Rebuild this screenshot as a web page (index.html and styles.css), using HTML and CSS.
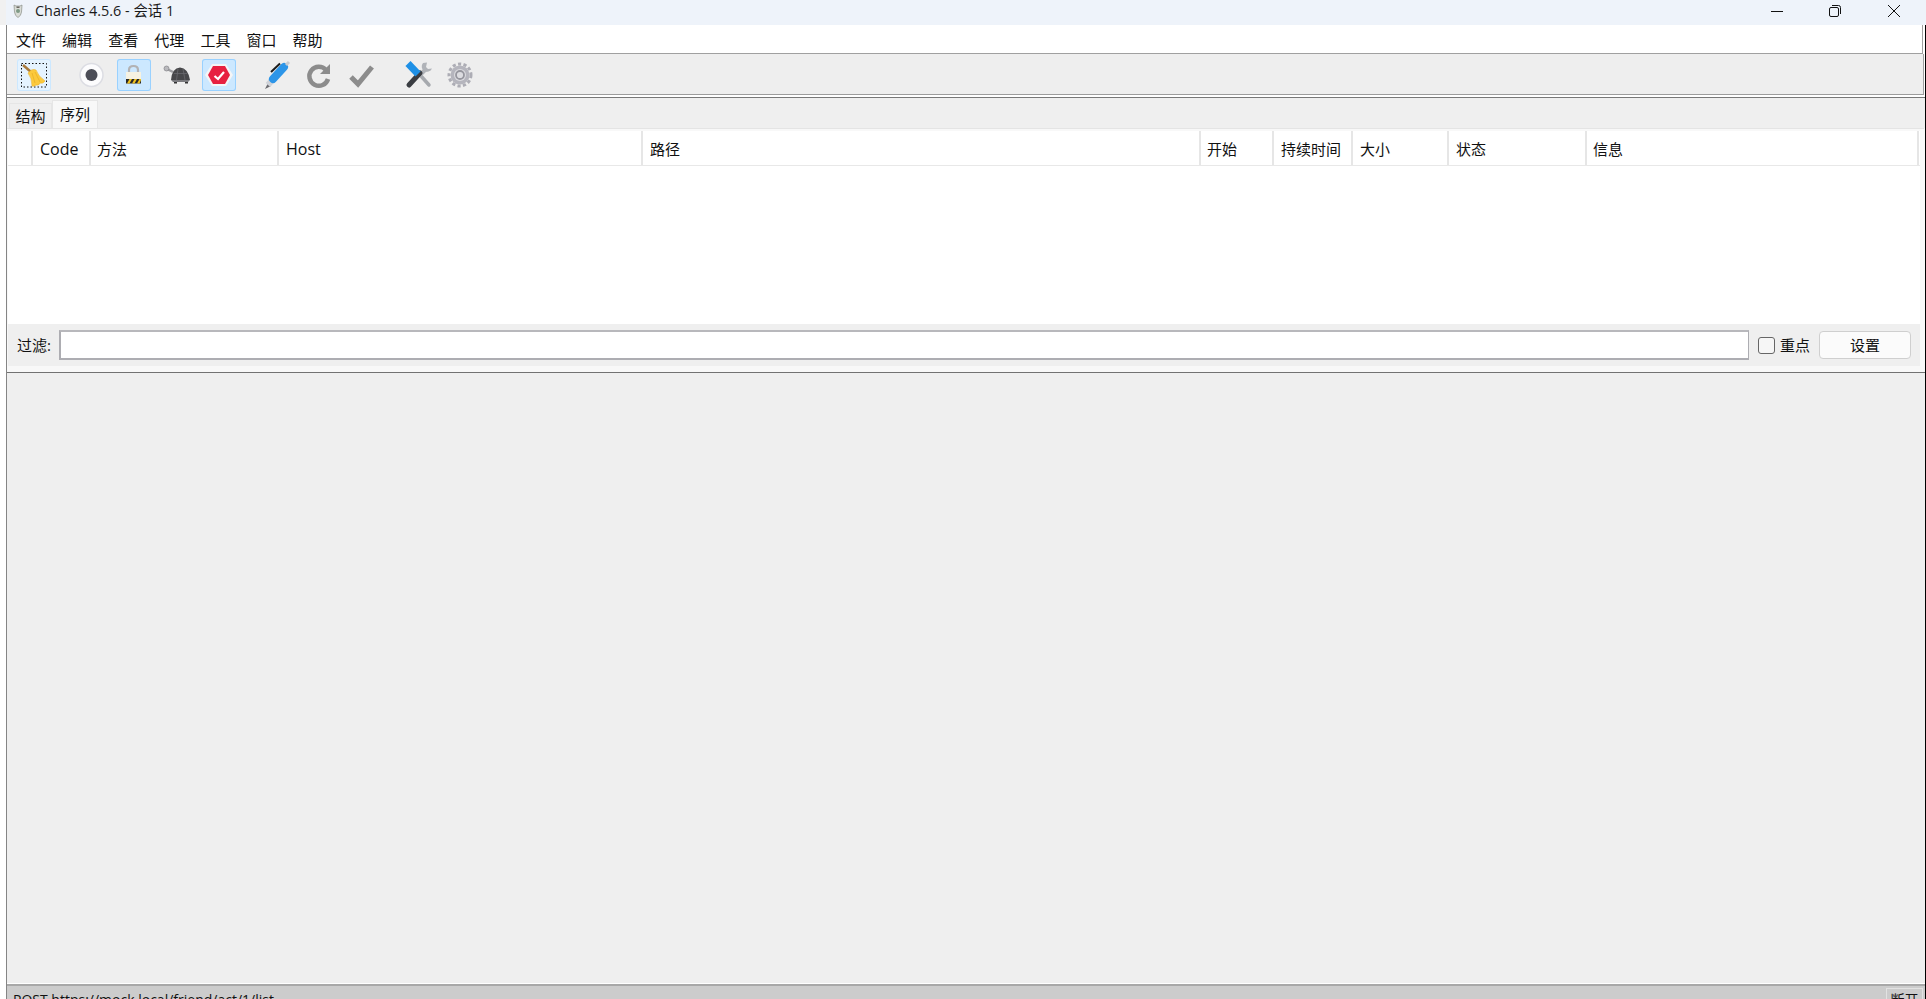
FILE: index.html
```html
<!DOCTYPE html>
<html lang="zh">
<head>
<meta charset="utf-8">
<title>Charles 4.5.6 - 会话 1</title>
<link rel="stylesheet" href="styles.css">
</head>
<body>
<div class="window">
  <header class="titlebar">
    <svg class="app-icon" viewBox="0 0 10 14" width="10" height="14"><path d="M1 1 L3 2 H7 L9 1 L8.5 8 Q8 12 5 13.5 Q2 12 1.500 8 Z" fill="#d9dcd6" stroke="#8b8f88" stroke-width=".7"/><circle cx="5" cy="7" r="2" fill="#7f9a86"/><rect x="3.500" y="2.500" width="3" height="1.500" fill="#6d6a63"/></svg>
    <span class="title">Charles 4.5.6 - 会话 1</span>
    <div class="winctl">
      <span class="winbtn"><svg viewBox="0 0 14 14" width="14" height="14"><path d="M1 7.500 H13" stroke="#111" fill="none"/></svg></span>
      <span class="winbtn"><svg viewBox="0 0 14 14" width="14" height="14"><rect x="1.500" y="3.500" width="9" height="9" rx="1.500" fill="none" stroke="#111"/><path d="M4 1.500 H10.500 Q12.500 1.500 12.500 3.500 V10" fill="none" stroke="#111"/></svg></span>
      <span class="winbtn"><svg viewBox="0 0 14 14" width="14" height="14"><path d="M1 1 L13 13 M13 1 L1 13" stroke="#111" fill="none"/></svg></span>
    </div>
  </header>
  <div class="app">
    <nav class="menubar">
      <span class="menu">文件</span><span class="menu">编辑</span><span class="menu">查看</span><span class="menu">代理</span><span class="menu">工具</span><span class="menu">窗口</span><span class="menu">帮助</span>
    </nav>
    <div class="toolbar">
      <div class="tool-group">
        <span class="tool tool-hover">
          <svg viewBox="0 0 34 32" width="34" height="32"><rect x="4.500" y="4.500" width="25" height="23.500" fill="none" stroke="#111" stroke-dasharray="1.500 2"/><path d="M6 6 L14 13" stroke="#a9793b" stroke-width="2.500"/><path d="M11 14 Q15 9 19 11 Q21 17 28 22 Q26 25 23 24 Q22 27 19 26 Q17 28 15 27 Q15 19 11 14 Z" fill="#fbc93d" stroke="#eeb42c" stroke-width=".6"/><path d="M15 14 L18 24 M18 13 L23 23" stroke="#e8ad24" stroke-width=".7" fill="none"/></svg>
        </span>
      </div>
      <div class="tool-group tool-group-offset">
        <span class="tool">
          <svg viewBox="0 0 34 32" width="34" height="32"><circle cx="16.500" cy="16" r="11.500" fill="#fcfcfd" stroke="#dcdde3" stroke-width="1.500"/><circle cx="16.500" cy="16" r="6" fill="#4c4e57"/></svg>
        </span>
        <span class="tool tool-on">
          <svg viewBox="0 0 34 32" width="34" height="32"><path d="M12 14 V11 Q12 7 16.500 7 Q21 7 21 11 V14" fill="none" stroke="#b2b2b4" stroke-width="2.200"/><rect x="9" y="13" width="15" height="7" fill="#f6f2e2"/><rect x="9" y="20" width="15" height="4.500" fill="#2a2a28"/><path d="M10 24.500 L12.500 20 H15 L12.500 24.500 Z M15 24.500 L17.500 20 H20 L17.500 24.500 Z M20 24.500 L22.500 20 H24 V21 L22.500 24.500 Z" fill="#f1c21f"/></svg>
        </span>
        <span class="tool">
          <svg viewBox="0 0 34 32" width="34" height="32"><path d="M7 10 L13 13" stroke="#9d9da1" stroke-width="2.500"/><circle cx="6.500" cy="9.500" r="2.500" fill="#b9b9bd" stroke="#77777c" stroke-width=".6"/><path d="M11 21 Q12 9 20 8.500 Q28 9 30 21 Z" fill="#47474a"/><path d="M14 14.500 H27 M18 10 L16.500 21 M23 10 L25 21" stroke="#68686d" stroke-width=".8" fill="none"/><path d="M11 21 H30 L28 23 H13 Z" fill="#7b7b7f"/><rect x="14" y="23" width="3" height="1.500" fill="#333"/><rect x="25" y="23" width="3" height="1.500" fill="#333"/></svg>
        </span>
        <span class="tool tool-on">
          <svg viewBox="0 0 34 32" width="34" height="32"><path d="M10 5 H24 L31 16 L24 27 H10 L3 16 Z" fill="#f5f5f6"/><path d="M11 7 H23 L28 16 L23 25 H11 L6 16 Z" fill="#e72040"/><path d="M12.500 17 L16 20 L22 13" fill="none" stroke="#fff" stroke-width="2.200"/></svg>
        </span>
      </div>
      <div class="tool-group">
        <span class="tool">
          <svg viewBox="0 0 34 32" width="34" height="32"><path d="M9 24 L6 30 L12 27 Z" fill="#6b6b70"/><path d="M9 26 L14 20" stroke="#cfd2d8" stroke-width="6" stroke-linecap="butt"/><path d="M14 20 L25 8" stroke="#2c95e8" stroke-width="8" stroke-linecap="round"/><path d="M12 13 L21 4.500" stroke="#1c1c1c" stroke-width="2" fill="none"/><path d="M27 6 L30 3" stroke="#c8cbd0" stroke-width="3"/></svg>
        </span>
        <span class="tool">
          <svg viewBox="0 0 34 32" width="34" height="32"><path d="M24 11 A9.500 9.500 0 1 0 26 20" fill="none" stroke="#8c8c8c" stroke-width="4.500"/><path d="M28 5 V15 H18 Z" fill="#8c8c8c"/></svg>
        </span>
        <span class="tool">
          <svg viewBox="0 0 34 32" width="34" height="32"><path d="M7 18 L14 25 L28 8" fill="none" stroke="#8c8c8c" stroke-width="5"/></svg>
        </span>
      </div>
      <div class="tool-group">
        <span class="tool">
          <svg viewBox="0 0 34 32" width="34" height="32"><path d="M20 17 L28 26" stroke="#a6a9ae" stroke-width="3.500" stroke-linecap="round"/><path d="M18 17 L25 10" stroke="#b0b3b8" stroke-width="4"/><path d="M22 4 A5.500 5.500 0 0 0 23 12 A5.500 5.500 0 0 0 31 9.500 L27 10 L25 8 L26 3.500 Z" fill="#b0b3b8"/><path d="M8 26 L19 14" stroke="#3a3d42" stroke-width="5" stroke-linecap="round"/><path d="M7 4.500 L17 15" stroke="#1e90e6" stroke-width="7"/></svg>
        </span>
        <span class="tool">
          <svg viewBox="0 0 34 32" width="34" height="32"><circle cx="16" cy="16" r="11" fill="none" stroke="#adadb5" stroke-width="3" stroke-dasharray="3.200 2.300"/><circle cx="16" cy="16" r="9.500" fill="#b5b5bd"/><circle cx="16" cy="16" r="6" fill="#dcdce0"/><circle cx="16" cy="16" r="4" fill="none" stroke="#96969e" stroke-width="1.800"/></svg>
        </span>
      </div>
    </div>
    <div class="gap"></div>
    <section class="session">
      <div class="tabs">
        <span class="tab">结构</span>
        <span class="tab tab-active">序列</span>
      </div>
      <div class="table-wrap">
        <div class="thead">
          <span class="th c0"></span>
          <span class="th th-latin c1">Code</span>
          <span class="th c2">方法</span>
          <span class="th th-latin c3">Host</span>
          <span class="th c4">路径</span>
          <span class="th c5">开始</span>
          <span class="th c6">持续时间</span>
          <span class="th c7">大小</span>
          <span class="th c8">状态</span>
          <span class="th c9">信息</span>
        </div>
        <div class="tbody"></div>
      </div>
      <div class="filter">
        <label class="filter-label">过滤:</label>
        <div class="filter-input"></div>
        <span class="check"></span>
        <span class="check-label">重点</span>
        <span class="button">设置</span>
      </div>
    </section>
    <section class="detail"></section>
    <footer class="statusbar">
      <span class="status-text">POST https://mock.local/friend/act/1/list</span>
      <span class="status-btn">断开</span>
    </footer>
  </div>
</div>
</body>
</html>
```

FILE: styles.css
```css
* { box-sizing: border-box; }
html, body { margin: 0; padding: 0; height: 100%; background: #fff; }
body {
  font-family: "Open Sans", "Noto Sans CJK SC", sans-serif;
  font-size: 15px;
  color: #111;
  overflow: hidden;
}
.window { display: flex; flex-direction: column; height: 999px; overflow: hidden; }

.titlebar {
  display: flex; align-items: center;
  height: 25px; flex: none;
  background: #eef3fa;
  border-left: 6px solid #f1f1f1;
  padding: 0 3px 3px 7px;
}
.app-icon { flex: none; }
.title { margin-left: 12px; font-size: 14.400px; line-height: 20px; color: #1a1a1a; }
.winctl { margin-left: auto; display: flex; }
.winbtn { width: 58.5px; display: flex; justify-content: center; align-items: center; }

.app {
  flex: 1; min-height: 0;
  display: flex; flex-direction: column;
  margin-left: 6px;
  border-left: 1px solid #858585;
  border-right: 1px solid #000;
}

.menubar {
  flex: none; height: 29px;
  display: flex; align-items: center;
  padding: 1px 0 0 1px;
  margin-right: 2px;
  background: #fff;
  border-bottom: 1px solid #a0a0a0;
  border-right: 1px solid #a0a0a0;
}
.menu { width: 46.1px; padding-left: 8px; font-size: 15px; line-height: 24px; white-space: nowrap; }

.toolbar {
  flex: none; height: 41px;
  display: flex; align-items: flex-start;
  gap: 23px;
  padding: 5px 0 0 10px;
  margin-right: 1px;
  background: #eeeeee;
  border-bottom: 1px solid #9c9c9c;
  border-right: 1px solid #a0a0a0;
}
.tool-group { display: flex; gap: 8.500px; }
.tool-group-offset { margin-left: .5px; }
.tool { width: 34px; height: 32px; display: block; border-radius: 3px; }
.tool svg { display: block; }
.tool-hover { background: #e5f3ff; box-shadow: inset 0 0 0 1px #cce8ff; }
.tool-on { background: #cce8ff; box-shadow: inset 0 0 0 1px #99d1ff; }

.gap { flex: none; height: 2px; background: #fff; }

.session {
  flex: none; height: 275px;
  display: flex; flex-direction: column;
  background: #f8f8f8;
  border-top: 1px solid #787878;
  padding-bottom: 5px;
}
.tabs {
  flex: none; height: 30px;
  display: flex; align-items: flex-end;
  padding-left: 2px;
  background: #efefef;
}
.tab {
  width: 43px; height: 25px;
  font-size: 15px; line-height: 24px; text-align: center;
  border: 1px solid #e6e6e6; border-bottom: 0;
  background: #efefef;
}
.tab-active { width: 46px; height: 28px; background: #f8f8f8; line-height: 27px; }

.table-wrap {
  flex: none; height: 196px;
  display: flex; flex-direction: column;
  margin-right: 1px;
  border-top: 1px solid #e4e4e4;
  padding: 2px 4px 0 1px;
  background: #f8f8f8;
}
.thead {
  flex: none; height: 35px;
  display: flex;
  background: #fff;
  border-bottom: 1px solid #e8e8e8;
}
.th {
  flex: none; height: 34px;
  padding-left: 7px;
  font-size: 15px; line-height: 36px;
  border-right: 2px solid #e6e6e6;
  white-space: nowrap; overflow: hidden;
  color: #111;
}
.th-latin { font-size: 16px; }
.c0 { width: 25px; }
.c1 { width: 58px; }
.c2 { width: 188px; padding-left: 6px; }
.c3 { width: 364px; }
.c4 { width: 558px; }
.c5 { width: 73px; padding-left: 6px; }
.c6 { width: 79px; }
.c7 { width: 96px; }
.c8 { width: 138px; }
.c9 { width: 332px; padding-left: 6px; }
.tbody { flex: 1; background: #fff; }

.filter {
  flex: none; height: 42px;
  display: flex; align-items: center;
  margin-left: 1px; margin-right: 5px;
  padding: 0 6px 0 9px;
  background: #efefef;
}
.filter-label { width: 42px; font-size: 15px; line-height: 20px; }
.filter-input {
  width: 1690px; height: 30px;
  background: #fff;
  border: 2px solid #adadb2; border-top-color: #b8b8bc; border-right-width: 1px;
}
.check {
  width: 17px; height: 17px; margin-left: 9px;
  border: 1px solid #666; border-radius: 3px; background: #f6f6f6;
}
.check-label { margin-left: 5px; width: 39px; font-size: 15px; line-height: 20px; }
.button {
  width: 92px; height: 28px;
  font-size: 15px; line-height: 26px; text-align: center;
  background: #fbfbfb;
  border: 1px solid #cfcfcf; border-radius: 4px;
}

.detail {
  flex: 1; min-height: 0;
  background: #efefef;
  border-top: 1px solid #727272;
}

.statusbar {
  flex: none; height: 16px;
  display: flex;
  border-top: 1px solid #fff;
  background: #cccccc;
  box-shadow: inset 0 2px 0 #a8a8a8;
  padding: 7px 2px 0 6px;
}
.status-text { font-size: 14px; line-height: 18px; white-space: nowrap; }
.status-btn {
  margin-left: auto; width: 37px; height: 20px;
  margin-top: -3px;
  border: 1px solid #e2e2e2; border-bottom: 0;
  font-size: 14px; line-height: 22px; text-align: center;
}
```
